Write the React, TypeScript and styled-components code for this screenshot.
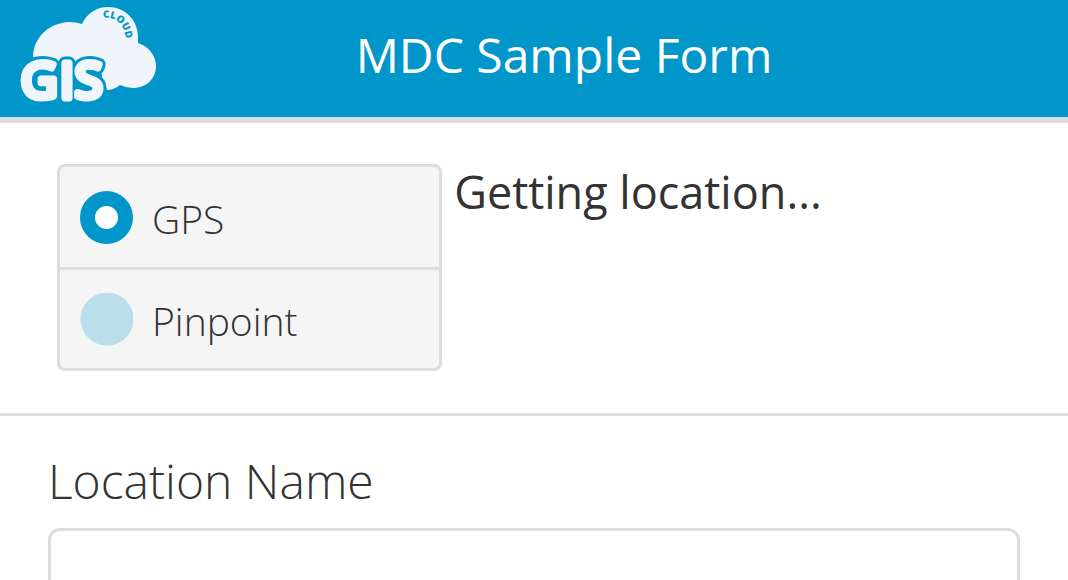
import React, { useState } from "react";
import styled, { createGlobalStyle } from "styled-components";

const blue = "#0096c9";
const line = "#dddddd";
const ink = "#333333";

const GlobalStyle = createGlobalStyle`
  *, *::before, *::after { box-sizing: border-box; }
  body {
    margin: 0;
    background: #ffffff;
    color: ${ink};
    font-family: "Open Sans", "Noto Sans", sans-serif;
  }
`;

const Header = styled.header`
  display: flex;
  align-items: flex-start;
  min-height: 123px;
  padding: 0 100px 0 0;
  background: ${blue};
  border-bottom: 6px solid ${line};
`;

const Logo = styled.svg`
  display: block;
  flex: none;
  width: 160px;
  height: 117px;
`;

const LogoLetters = styled.text`
  font-family: "Open Sans", sans-serif;
  font-size: 50px;
  font-weight: 400;
  stroke-linejoin: round;
`;

const LogoCaption = styled.text`
  font-family: "Open Sans", sans-serif;
  font-size: 10px;
  font-weight: 800;
  fill: ${blue};
`;

const Title = styled.h1`
  flex: 1;
  margin: 0;
  padding-top: 22px;
  color: #ffffff;
  font-size: 48px;
  font-weight: 400;
  line-height: 66px;
  text-align: center;
`;

const LocationSection = styled.section`
  display: flex;
  align-items: flex-start;
  gap: 12px;
  padding: 41px 48px 42px 57px;
  border-bottom: 3px solid ${line};
`;

const Options = styled.fieldset`
  flex: 0 0 40%;
  min-width: 0;
  margin: 0;
  padding: 0;
  background: #f5f5f5;
  border: 3px solid ${line};
  border-radius: 8px;
`;

const Option = styled.label`
  display: flex;
  align-items: center;
  gap: 19px;
  height: 100px;
  padding: 0 20px;
  font-size: 39px;
  font-weight: 300;
  line-height: 54px;

  & + & {
    height: 101px;
    border-top: 3px solid ${line};
  }
`;

const OptionText = styled.span`
  padding-top: 4px;
`;

const Radio = styled.input`
  appearance: none;
  flex: none;
  width: 53px;
  height: 53px;
  margin: 0;
  background: radial-gradient(circle at 27px 26px, #badfea 26px, transparent 27px);

  &:checked {
    background: radial-gradient(circle, #ffffff 11px, ${blue} 12px);
    border-radius: 50%;
  }
`;

const Status = styled.p`
  flex: 1;
  margin: 0;
  font-size: 45px;
  line-height: 56px;
`;

const Field = styled.div`
  padding: 32px 48px 48px;
`;

const FieldLabel = styled.label`
  display: block;
  margin-bottom: 14px;
  font-size: 48px;
  font-weight: 300;
  line-height: 66px;
`;

const TextInput = styled.input`
  display: block;
  width: 100%;
  height: 100px;
  padding: 0 20px;
  background: #ffffff;
  border: 3px solid ${line};
  border-radius: 12px;
  color: ${ink};
  font: inherit;
  font-size: 39px;
`;

function GisCloudLogo() {
  return (
    <Logo viewBox="0 0 160 117" role="img" aria-label="GIS Cloud">
      <defs>
        <path id="caption-arc" d="M103 18 C116 16 126 24 126 44" />
      </defs>
      <path
        fill="#eff5fa"
        d="M33 56 C34 37 49 23 69 22 Q76 22 82 24 C87 13 97 7 108 7 C125 7 138 20 138 37 L138 43 C148 46 156 55 156 66 C156 79 146 88 133 88 Q126 88 120 85 Q114 90 107 90 L102 78 L101 64 L88 60 L76 64 L66 63 L42 62 L34 59 Z"
      />
      <LogoLetters x="21 60 75" y="98" fill={blue} stroke={blue} strokeWidth="13">
        GIS
      </LogoLetters>
      <LogoLetters x="21 60 75" y="98" fill="#eff5fa" stroke="#eff5fa" strokeWidth="7" aria-hidden="true">
        GIS
      </LogoLetters>
      <LogoCaption>
        <textPath href="#caption-arc">CLOUD</textPath>
      </LogoCaption>
    </Logo>
  );
}

const sources = ["GPS", "Pinpoint"];

export default function App() {
  const [source, setSource] = useState("GPS");
  const [name, setName] = useState("");
  return (
    <>
      <GlobalStyle />
      <Header>
        <GisCloudLogo />
        <Title>MDC Sample Form</Title>
      </Header>
      <main>
        <LocationSection>
          <Options aria-label="Location source">
            {sources.map((item) => (
              <Option key={item}>
                <Radio
                  type="radio"
                  name="source"
                  checked={source === item}
                  onChange={() => setSource(item)}
                />
                <OptionText>{item}</OptionText>
              </Option>
            ))}
          </Options>
          <Status role="status">Getting location...</Status>
        </LocationSection>
        <Field>
          <FieldLabel htmlFor="location-name">Location Name</FieldLabel>
          <TextInput
            id="location-name"
            type="text"
            value={name}
            onChange={(event) => setName(event.target.value)}
          />
        </Field>
      </main>
    </>
  );
}
